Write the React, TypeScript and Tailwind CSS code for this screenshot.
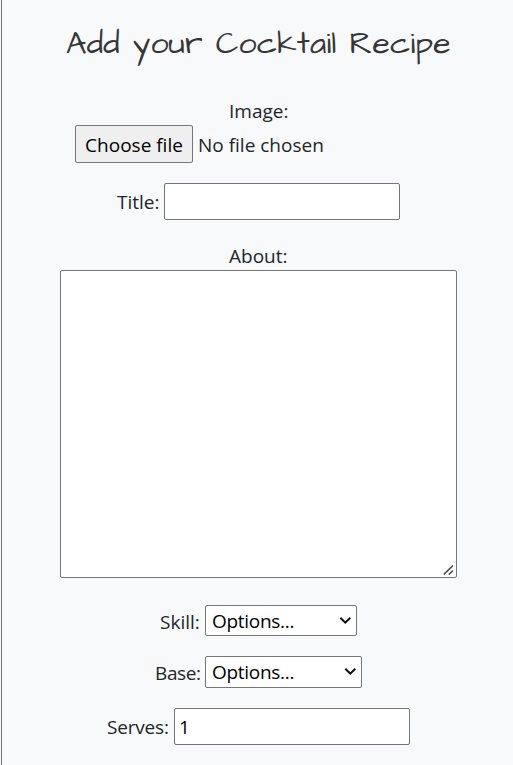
import type { ReactNode } from "react";

const field = "rounded-[2px] border border-[#767676] bg-white text-black outline-none";

function Row({ className, children }: { className: string; children: ReactNode }) {
  return <div className={`flex items-center whitespace-nowrap ${className}`}>{children}</div>;
}

function Select({ id, className }: { id: string; className: string }) {
  return (
    <div className={`relative ${className}`}>
      <select id={id} className={`block h-full w-full appearance-none pb-px pl-[6px] tracking-[-0.015em] ${field}`}>
        <option>Options...</option>
      </select>
      <svg className="pointer-events-none absolute right-[5px] top-[10px]" width="13" height="10" viewBox="0 0 13 10" fill="none" stroke="#101010" strokeWidth="2">
        <path d="M1.3 2.7 6.3 7.7 11.3 2.7" />
      </svg>
    </div>
  );
}

export default function App() {
  return (
    <div className="flex h-[765px] w-[513px] flex-col overflow-hidden bg-[#f8f9fb] pl-px">
      <form className="flex h-full flex-col border-l border-[#6f7277] font-['Segoe_UI','Open_Sans',sans-serif] text-[19px] leading-[30px] font-normal text-[#212529] [font-variant-ligatures:none]">
        <h1 className="mt-[22px] flex h-[44px] items-center whitespace-nowrap pl-[64px] font-['Architects_Daughter','Lato',cursive] text-[32px] font-normal tracking-[0.0045em] text-[#363636]">
          Add your Cocktail Recipe
        </h1>

        <label className="mt-[30px] h-[29px] pl-[227px]">Image:</label>
        <Row className="h-[38px] pl-[73px]">
          <button type="button" className="h-[38px] w-[118px] rounded-[2px] border border-[#767676] bg-[#efefef] pt-px text-black">Choose file</button>
          <span className="pl-[5px] pt-px">No file chosen</span>
        </Row>

        <Row className="mt-5 h-[37px] pl-[115px]">
          <label htmlFor="title" className="w-[47px]">Title:</label>
          <input id="title" className={`h-[37px] w-[236px] px-1 ${field}`} />
        </Row>

        <label htmlFor="about" className="mt-[21px] h-[29px] pl-[227px]">About:</label>
        <div className="relative ml-[58px] h-[308px] w-[397px]">
          <textarea id="about" className={`block h-full w-full resize-none ${field}`} />
          <svg className="pointer-events-none absolute bottom-[3px] right-[3px]" width="11" height="10" viewBox="0 0 11 10" stroke="#505050" strokeWidth="1.7">
            <path d="M.7 9.5 10 .5M5.8 9.5 10 5.5" />
          </svg>
        </div>

        <Row className="mt-[27px] h-[31px] pl-[158px]">
          <label htmlFor="skill" className="w-[45px] pt-[3px]">Skill:</label>
          <Select id="skill" className="h-[31px] w-[152px]" />
        </Row>
        <Row className="mt-5 h-[32px] pl-[153px]">
          <label htmlFor="base" className="w-[50px] pt-[2px] tracking-[-0.02em]">Base:</label>
          <Select id="base" className="h-[32px] w-[157px]" />
        </Row>
        <Row className="mt-5 h-[37px] pl-[105px]">
          <label htmlFor="serves" className="w-[67px] tracking-[-0.01em]">Serves:</label>
          <input id="serves" defaultValue="1" className={`h-[37px] w-[236px] px-1 ${field}`} />
        </Row>
      </form>
    </div>
  );
}
